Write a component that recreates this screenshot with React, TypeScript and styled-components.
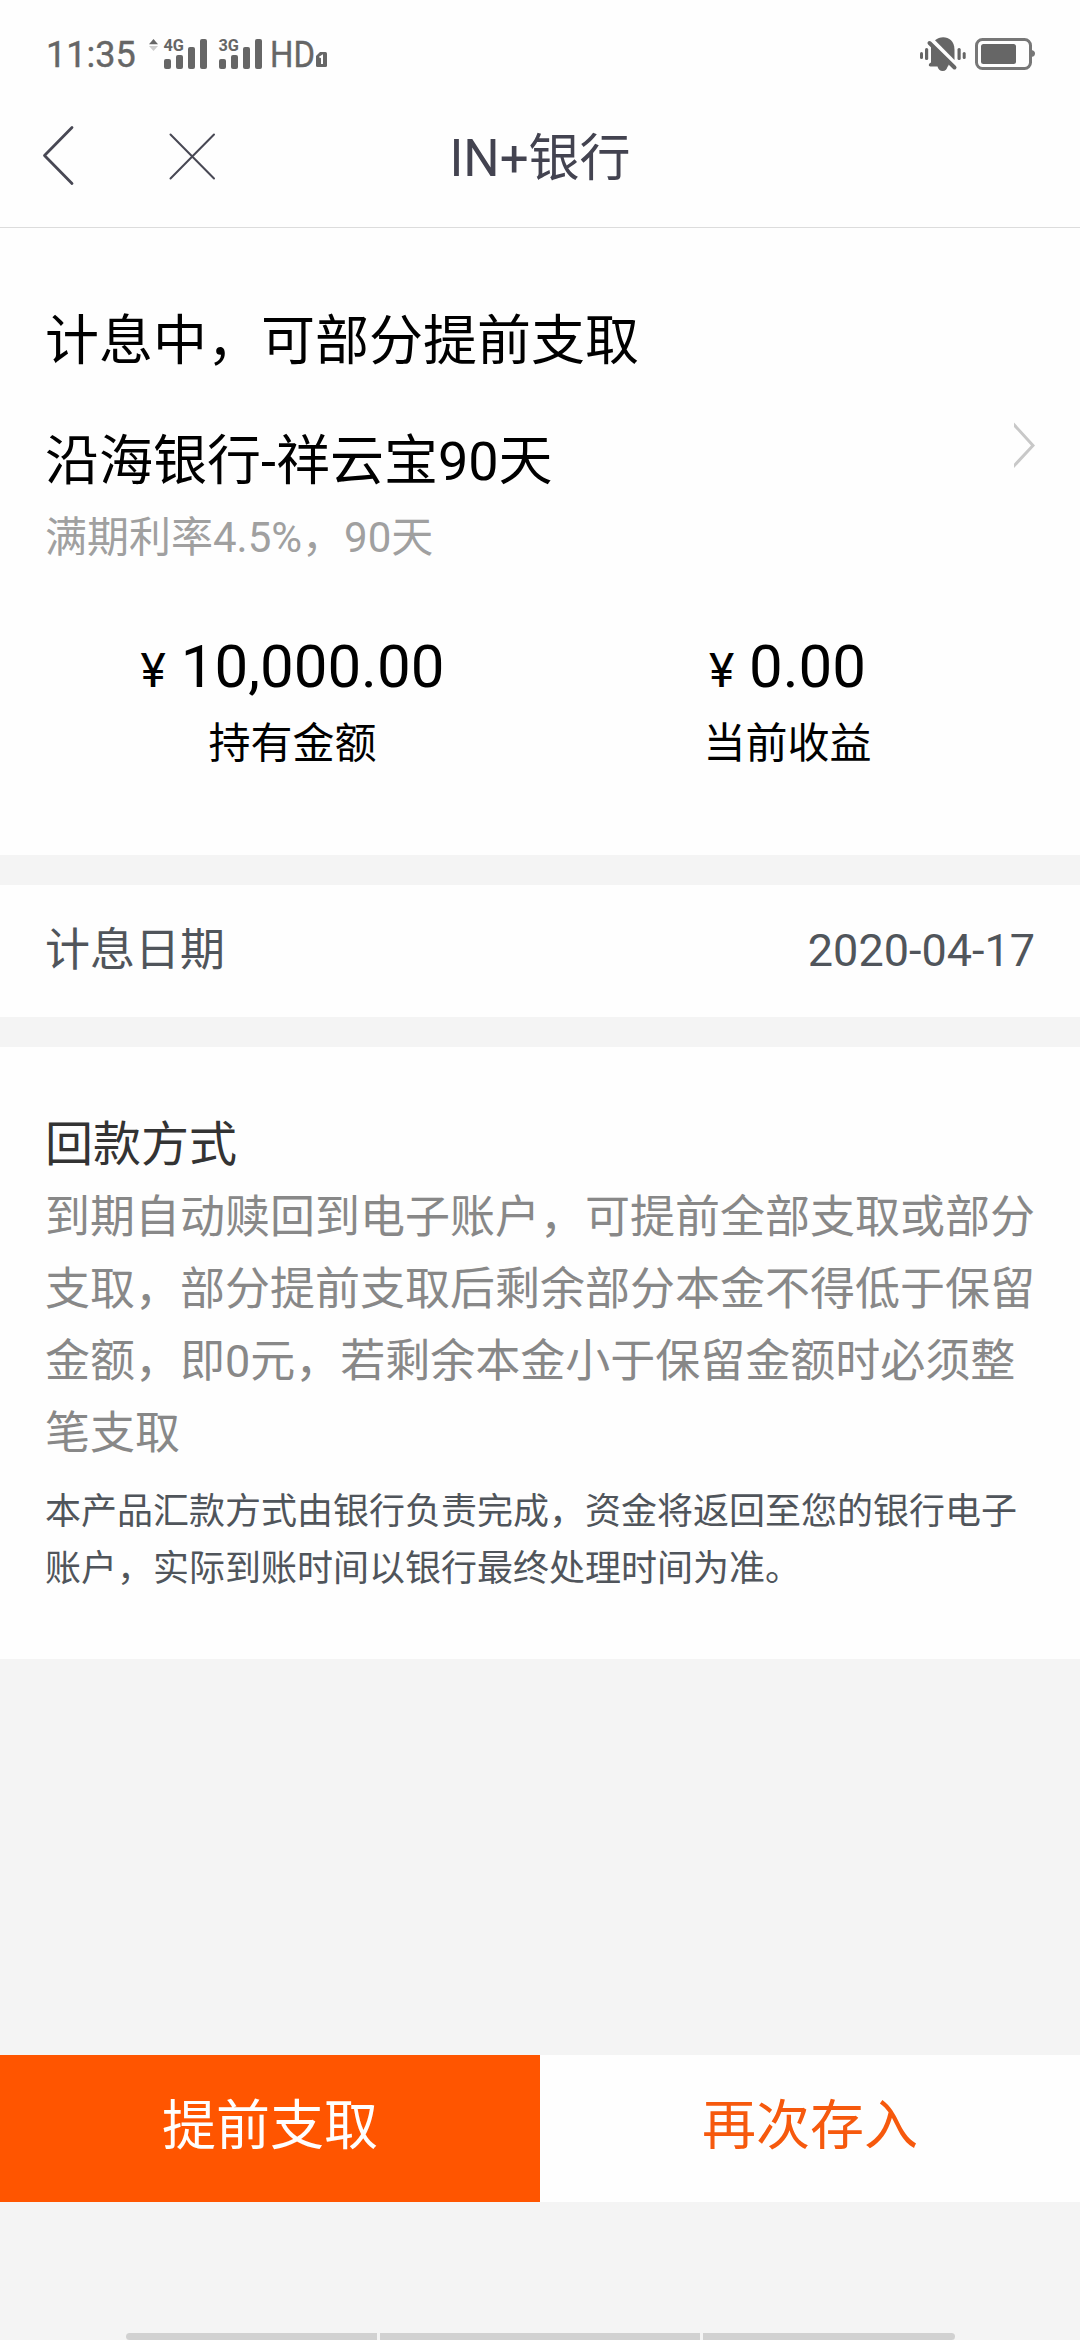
import React from "react";
import styled, { createGlobalStyle } from "styled-components";

const GlobalStyle = createGlobalStyle`
  body {
    margin: 0;
    background: #f4f4f4;
    font-family: Roboto, "Noto Sans CJK SC", sans-serif;
  }
  * { box-sizing: border-box; }
  svg { display: block; flex: none; }
`;

const Screen = styled.div`
  width: 1080px;
  height: 2340px;
  display: flex;
  flex-direction: column;
  overflow: hidden;
  background: #f4f4f4;
`;

const StatusBar = styled.header`
  height: 106px;
  padding: 0 44px 0 46px;
  display: flex;
  justify-content: space-between;
  align-items: flex-start;
  background: #fefefe;
  color: #666;
`;

const StatusGroup = styled.div`
  display: flex;
  align-items: flex-start;
  height: 106px;
`;

const Clock = styled.span`
  width: 103px;
  padding-top: 34px;
  font-size: 36px;
  line-height: 43px;
  -webkit-text-stroke: 0.4px #666;
`;

const NavBar = styled.nav`
  height: 122px;
  display: grid;
  grid-template-columns: 300px 1fr 300px;
  background: #fefefe;
  border-bottom: 1px solid #dcdcdc;
`;

const NavActions = styled.div`
  display: flex;
  padding: 18px 0 0 40px;
`;

const NavButton = styled.button<{ $width: number }>`
  width: ${(p) => p.$width}px;
  height: 64px;
  padding: 0;
  border: 0;
  background: none;
`;

const NavTitle = styled.h1`
  margin: 0;
  text-align: center;
  font-size: 51px;
  font-weight: 400;
  line-height: 106px;
  color: #434350;
`;

const Panel = styled.section<{ $height: number; $top: number }>`
  height: ${(p) => p.$height}px;
  padding: ${(p) => p.$top}px 45px 0;
  margin-bottom: 30px;
  flex: none;
  background: #fefefe;
`;

const Heading = styled.h2`
  margin: 0;
  font-size: 54px;
  font-weight: 400;
  line-height: 86px;
  color: #000;
`;

const ProductLink = styled.div`
  display: flex;
  justify-content: space-between;
  align-items: flex-start;
  margin-top: 34px;
  svg { margin-top: 2px; }
`;

const Rate = styled.p`
  margin: 0;
  font-size: 42px;
  line-height: 66px;
  color: #a0a0a0;
`;

const Figures = styled.div`
  display: grid;
  grid-template-columns: 1fr 1fr;
  margin-top: 56px;
  text-align: center;
  color: #000;
`;

const Amount = styled.div`
  font-size: 60px;
  line-height: 80px;
`;

const Currency = styled.span`
  font-size: 48px;
  line-height: 1;
`;

const FigureLabel = styled.div`
  margin-top: 4px;
  font-size: 42px;
  line-height: 66px;
`;

const DateRow = styled.div`
  display: flex;
  justify-content: space-between;
  font-size: 45px;
  line-height: 132px;
  color: #50555b;
`;

const SubHeading = styled.h3`
  margin: 0;
  font-size: 48px;
  font-weight: 400;
  line-height: 74px;
  color: #333;
`;

const Terms = styled.p`
  margin: 0;
  font-size: 45px;
  line-height: 72px;
  color: #888;
`;

const Note = styled.p`
  margin: 14px 0 0;
  font-size: 36px;
  line-height: 57px;
  color: #50555b;
`;

const Actions = styled.div`
  display: grid;
  grid-template-columns: 1fr 1fr;
  height: 147px;
  flex: none;
  margin-top: 366px;
`;

const ActionButton = styled.button<{ $primary?: boolean }>`
  border: 0;
  padding: 0 0 3px;
  font: 400 54px/80px Roboto, "Noto Sans CJK SC", sans-serif;
  color: ${(p) => (p.$primary ? "#fefefe" : "#f6590d")};
  background: ${(p) => (p.$primary ? "#ff5500" : "#fefefe")};
`;

const GestureBar = styled.footer`
  display: grid;
  grid-template-columns: 251px 320px 252px;
  gap: 3px;
  width: 829px;
  height: 7px;
  flex: none;
  margin: auto auto 0 126px;
`;

const GestureSegment = styled.span<{ $radius?: string }>`
  background: #d1d1d1;
  border-radius: ${(p) => p.$radius ?? "0"};
`;

const SignalLabel = styled.text`
  font: 700 16.5px Roboto, sans-serif;
`;

const bars = [
  { x: 0, y: 59 },
  { x: 12, y: 55 },
  { x: 24, y: 47 },
  { x: 36, y: 39 },
];

const Signal = ({ x, label }: { x: number; label: string }) => (
  <g transform={`translate(${x} 0)`}>
    {bars.map((b) => (
      <rect key={b.x} x={b.x} y={b.y} width="7" height={69 - b.y} rx="2" />
    ))}
    <SignalLabel x="-0.5" y="51" textLength="20.5" lengthAdjust="spacingAndGlyphs">
      {label}
    </SignalLabel>
  </g>
);

const NetworkIcons = () => (
  <svg width="182" height="106" viewBox="149 0 182 106" fill="#666">
    <path d="M149 44.3 L153.5 39 L158 44.3z" />
    <path d="M149 46 L153.5 51 L158 46z" fill="#ccc" />
    <Signal x={164} label="4G" />
    <Signal x={219} label="3G" />
    <text
      x="270"
      y="67.3"
      fontSize="36"
      fontFamily="Roboto, sans-serif"
      stroke="#666"
      strokeWidth="0.4"
      textLength="45"
      lengthAdjust="spacingAndGlyphs"
    >
      HD
    </text>
    <path d="M320 52h5.5a1.5 1.5 0 0 1 1.5 1.5v12a1.5 1.5 0 0 1-1.5 1.5h-8a1.5 1.5 0 0 1-1.5-1.5V56z" />
    <path d="M319.5 57.5 L322 56v8" stroke="#fefefe" strokeWidth="2" fill="none" />
  </svg>
);

const MutedBell = () => (
  <svg width="46" height="106" viewBox="920 0 46 106" fill="#666">
    <rect x="920" y="52" width="3" height="7" rx="1.5" />
    <rect x="925" y="48" width="3.2" height="12" rx="1.5" />
    <rect x="957.5" y="48" width="3.2" height="12" rx="1.5" />
    <rect x="962.7" y="52" width="3" height="7" rx="1.5" />
    <path d="M935 40.3 C942 34.5 954.5 37 954.5 50 V60z" />
    <path d="M931 46 L949 64 L948 66.5 H947.6 C947 69 945.5 71 942.7 71 C940 71 938 69 937.5 66.5 H930.5 C928 66.5 928.5 63.3 931 62.5z" />
    <path d="M929.5 43 L954.5 67.5" stroke="#666" strokeWidth="4" strokeLinecap="round" />
  </svg>
);

const Battery = () => (
  <svg width="61" height="106" viewBox="975 0 61 106" fill="#666">
    <rect x="976.5" y="39.5" width="54" height="29" rx="6" fill="none" stroke="#777" strokeWidth="3" />
    <rect x="981" y="44" width="35" height="20" rx="2.5" />
    <path d="M1031.5 50 q3.5 .5 3.5 3.5 t-3.5 3.5z" fill="#777" />
  </svg>
);

const StatusIcons = styled(StatusGroup)`
  gap: 9px;
`;

export default function App() {
  return (
    <>
      <GlobalStyle />
      <Screen lang="zh-CN">
        <StatusBar>
          <StatusGroup>
            <Clock>11:35</Clock>
            <NetworkIcons />
          </StatusGroup>
          <StatusIcons>
            <MutedBell />
            <Battery />
          </StatusIcons>
        </StatusBar>
        <NavBar>
          <NavActions>
            <NavButton $width={126} aria-label="返回">
              <svg width="40" height="64" viewBox="40 124 40 64" fill="none" stroke="#484854" strokeWidth="2.8" strokeLinecap="round" strokeLinejoin="round">
                <path d="M72 127.5 L44.5 155.5 L72 183.5" />
              </svg>
            </NavButton>
            <NavButton $width={52} aria-label="关闭">
              <svg width="52" height="64" viewBox="166 124 52 64" fill="none" stroke="#484854" strokeWidth="2" strokeLinecap="round">
                <path d="M170.5 134.5 L214 178.5 M214 134.5 L170.5 178.5" />
              </svg>
            </NavButton>
          </NavActions>
          <NavTitle>IN+银行</NavTitle>
        </NavBar>

        <Panel $height={627} $top={71}>
          <Heading>计息中，可部分提前支取</Heading>
          <ProductLink>
            <div>
              <Heading>沿海银行-祥云宝90天</Heading>
              <Rate>满期利率4.5%，90天</Rate>
            </div>
            <svg width="21" height="48" viewBox="1014 421 21 48" fill="none" stroke="#c8c8c8" strokeWidth="3">
              <path d="M1012 422.5 L1033 445.5 L1012 468" />
            </svg>
          </ProductLink>
          <Figures>
            <div>
              <Amount><Currency>¥</Currency> 10,000.00</Amount>
              <FigureLabel>持有金额</FigureLabel>
            </div>
            <div>
              <Amount><Currency>¥</Currency> 0.00</Amount>
              <FigureLabel>当前收益</FigureLabel>
            </div>
          </Figures>
        </Panel>

        <Panel $height={132} $top={0}>
          <DateRow>
            <span>计息日期</span>
            <span>2020-04-17</span>
          </DateRow>
        </Panel>

        <Panel $height={612} $top={61}>
          <SubHeading>回款方式</SubHeading>
          <Terms>
            到期自动赎回到电子账户，可提前全部支取或部分支取，部分提前支取后剩余部分本金不得低于保留金额，即0元，若剩余本金小于保留金额时必须整笔支取
          </Terms>
          <Note>
            本产品汇款方式由银行负责完成，资金将返回至您的银行电子账户，实际到账时间以银行最终处理时间为准。
          </Note>
        </Panel>

        <Actions>
          <ActionButton $primary>提前支取</ActionButton>
          <ActionButton>再次存入</ActionButton>
        </Actions>

        <GestureBar>
          <GestureSegment $radius="5px 0 0 5px" />
          <GestureSegment />
          <GestureSegment $radius="0 5px 5px 0" />
        </GestureBar>
      </Screen>
    </>
  );
}
